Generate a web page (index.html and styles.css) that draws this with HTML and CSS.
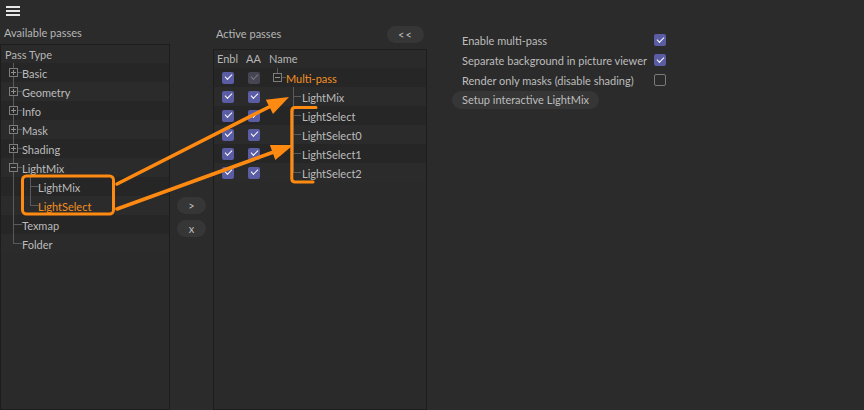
FILE: index.html
```html
<!DOCTYPE html>
<html>
<head>
<meta charset="utf-8">
<link rel="stylesheet" href="styles.css">
</head>
<body>
<div class="app">
  <header class="topbar">
    <span class="burger"><i></i><i></i><i></i></span>
  </header>
  <main class="main">
    <section class="col-avail">
      <div class="sec-label">Available passes</div>
      <div class="panel">
        <div class="panel-head low">Pass Type</div>
        <div class="rows tree">
          <div class="node"><span class="exp plus"></span>Basic</div>
          <div class="node"><span class="exp plus"></span>Geometry</div>
          <div class="node"><span class="exp plus"></span>Info</div>
          <div class="node"><span class="exp plus"></span>Mask</div>
          <div class="node"><span class="exp plus"></span>Shading</div>
          <div class="node"><span class="exp minus"></span>LightMix</div>
          <div class="node child"><span class="sub"></span>LightMix</div>
          <div class="node child sub-last"><span class="sub"></span><span class="hl">LightSelect</span></div>
          <div class="node leaf">Texmap</div>
          <div class="node leaf last">Folder</div>
        </div>
      </div>
    </section>

    <section class="col-move">
      <button class="pill small">&gt;</button>
      <button class="pill small">x</button>
    </section>

    <section class="col-active">
      <div class="sec-label row-label">
        <span>Active passes</span>
        <button class="pill back">&lt;&lt;</button>
      </div>
      <div class="panel">
        <div class="panel-head cols">
          <span class="h-enbl">Enbl</span><span class="h-aa">AA</span><span>Name</span>
        </div>
        <div class="rows">
          <div class="arow">
            <span class="cb on"></span><span class="cb dis"></span>
            <span class="name root"><span class="exp minus"></span><span class="hl">Multi-pass</span></span>
          </div>
          <div class="arow">
            <span class="cb on"></span><span class="cb on"></span>
            <span class="name kid">LightMix</span>
          </div>
          <div class="arow">
            <span class="cb on"></span><span class="cb on"></span>
            <span class="name kid">LightSelect</span>
          </div>
          <div class="arow">
            <span class="cb on"></span><span class="cb on"></span>
            <span class="name kid">LightSelect0</span>
          </div>
          <div class="arow">
            <span class="cb on"></span><span class="cb on"></span>
            <span class="name kid">LightSelect1</span>
          </div>
          <div class="arow">
            <span class="cb on"></span><span class="cb on"></span>
            <span class="name kid kid-last">LightSelect2</span>
          </div>
        </div>
      </div>
    </section>

    <section class="col-settings">
      <div class="opt"><span class="opt-label">Enable multi-pass</span><span class="cb on"></span></div>
      <div class="opt"><span class="opt-label">Separate background in picture viewer</span><span class="cb on"></span></div>
      <div class="opt"><span class="opt-label">Render only masks (disable shading)</span><span class="cb off"></span></div>
      <button class="pill setup">Setup interactive LightMix</button>
    </section>
  </main>

  <svg class="annot" width="864" height="410" viewBox="0 0 864 410">
    <g fill="none" stroke="#ff8a12" stroke-width="3" stroke-linecap="round" stroke-linejoin="round">
      <rect x="22.5" y="176" width="91" height="38" rx="4"/>
      <path d="M316 107.5 H295 Q291.8 107.5 291.8 111 V178.5 Q291.8 182 295 182 H313"/>
      <line x1="117" y1="184" x2="270" y2="106.5" stroke-width="3.6"/>
      <line x1="117" y1="209" x2="273" y2="152.3" stroke-width="3.6"/>
    </g>
    <g fill="#ff8a12">
      <polygon points="289,97 273,114 265.8,99.8"/>
      <polygon points="293.3,145 275.3,159.9 269.9,144.9"/>
    </g>
  </svg>
</div>
</body>
</html>
```
FILE: styles.css
```css
* { box-sizing: border-box; }

html, body {
  margin: 0;
  padding: 0;
  background: #2b2b2b;
}

body {
  font-family: "Lato", "Liberation Sans", sans-serif;
  font-size: 11px;
  color: #bcbcbc;
}

.app {
  position: relative;
  width: 864px;
  height: 410px;
  overflow: hidden;
}

/* ---------- top bar ---------- */
.topbar {
  height: 22px;
  padding: 6px 0 0 6px;
}
.burger {
  display: flex;
  flex-direction: column;
  gap: 2px;
  width: 14px;
}
.burger i {
  display: block;
  height: 2px;
  background: #e6e6e6;
}

/* ---------- main columns ---------- */
.main {
  display: flex;
  height: 388px;
}

.sec-label {
  height: 22px;
  line-height: 22px;
  padding-left: 4px;
  color: #b6b6b6;
}

.panel {
  flex: 1;
  display: flex;
  flex-direction: column;
  border: 1px solid #1d1d1d;
  background: #2a2a2a;
}

.panel-head {
  height: 18px;
  line-height: 18px;
  padding-left: 4px;
  color: #b6b6b6;
}
.panel-head.low { padding-top: 1px; }

.rows > :nth-child(odd) { background: #262626; }
.rows > :nth-child(even) { background: #2b2b2b; }

/* Available passes */
.col-avail {
  width: 170px;
  display: flex;
  flex-direction: column;
}

.node {
  position: relative;
  height: 19px;
  line-height: 19px;
  padding-top: 1px;
  padding-left: 21px;
  white-space: nowrap;
}
.node::before {
  content: "";
  position: absolute;
  left: 12px;
  top: 0;
  bottom: 0;
  width: 1px;
  background: #5a5a5a;
}
.node::after {
  content: "";
  position: absolute;
  left: 12px;
  top: 9px;
  width: 9px;
  height: 1px;
  background: #5a5a5a;
}
.node.last::before { bottom: 9px; }
.node.child { padding-left: 37px; }
.node.child::after { display: none; }

.sub {
  position: absolute;
  left: 29px;
  top: 0;
  bottom: 0;
  width: 9px;
  border-left: 1px solid #5a5a5a;
}
.sub::after {
  content: "";
  position: absolute;
  left: 0;
  top: 9px;
  width: 8px;
  height: 1px;
  background: #5a5a5a;
}
.sub-last .sub { bottom: 9px; }

.exp {
  position: absolute;
  width: 9px;
  height: 9px;
  border: 1px solid #7c7c7c;
  background: #2a2a2a;
  z-index: 1;
}
.tree .exp { left: 8px; top: 5px; }
.exp::before {
  content: "";
  position: absolute;
  left: 1px;
  right: 1px;
  top: 3px;
  height: 1px;
  background: #8e8e8e;
}
.exp.plus::after {
  content: "";
  position: absolute;
  top: 1px;
  bottom: 1px;
  left: 3px;
  width: 1px;
  background: #8e8e8e;
}
.rows > :nth-child(odd) .exp { background: #262626; }

.hl { color: #f39021; }

/* middle move buttons */
.col-move {
  width: 43px;
  display: flex;
  flex-direction: column;
  gap: 6px;
  padding: 175px 0 0 7px;
}

.pill {
  font: inherit;
  color: #bdbdbd;
  background: #363636;
  border: none;
  border-radius: 9px;
  height: 17px;
  padding: 0;
  line-height: 17px;
  cursor: pointer;
}
.pill.small { width: 29px; }

/* Active passes */
.col-active {
  width: 214px;
  display: flex;
  flex-direction: column;
}
.row-label {
  height: 27px;
  display: flex;
  align-items: flex-start;
  justify-content: space-between;
  padding: 0 3px 0 3px;
  line-height: 24px;
}
.pill.back {
  width: 37px;
  margin-top: 4px;
  letter-spacing: 1px;
}

.cols {
  display: flex;
  padding-left: 3px;
}
.h-enbl { width: 29px; }
.h-aa { width: 23px; }

.arow {
  display: flex;
  align-items: center;
  height: 19px;
  padding-left: 8px;
  gap: 14px;
}

.cb {
  flex: none;
  position: relative;
  width: 12px;
  height: 12px;
  border-radius: 2px;
}
.cb.on { background: #5b5da4; }
.cb.dis { background: #464652; }
.cb.off { border: 1px solid #7a7a7a; }
.cb.on::after,
.cb.dis::after {
  content: "";
  position: absolute;
  left: 3px;
  top: 2.5px;
  width: 6px;
  height: 3px;
  border-left: 1.6px solid #ffffff;
  border-bottom: 1.6px solid #ffffff;
  transform: rotate(-45deg);
}
.cb.dis::after { border-color: #7a7a88; }

.name {
  position: relative;
  align-self: stretch;
  flex: 1;
  margin-left: -14px;
  line-height: 19px;
  padding-top: 1px;
  white-space: nowrap;
}
.name.root { padding-left: 26px; }
.name.root .exp { left: 13px; top: 5px; }
.name.root::before {
  content: "";
  position: absolute;
  left: 17px;
  top: 0;
  height: 5px;
  width: 1px;
  background: #5a5a5a;
}
.name.root::after {
  content: "";
  position: absolute;
  left: 22px;
  top: 9px;
  width: 4px;
  height: 1px;
  background: #5a5a5a;
}
.name.kid { padding-left: 42px; }
.name.kid::before {
  content: "";
  position: absolute;
  left: 33px;
  top: 0;
  bottom: 0;
  width: 1px;
  background: #5a5a5a;
}
.name.kid-last::before { bottom: 9px; }
.name.kid::after {
  content: "";
  position: absolute;
  left: 33px;
  top: 9px;
  width: 8px;
  height: 1px;
  background: #5a5a5a;
}

/* settings */
.col-settings {
  display: flex;
  flex-direction: column;
  align-items: flex-start;
  padding: 8px 0 0 25px;
}
.opt {
  display: flex;
  align-items: center;
  height: 20px;
  padding-left: 10px;
}
.opt-label { width: 192px; color: #bdbdbd; }
.pill.setup {
  margin-top: 1px;
  height: 18px;
  line-height: 18px;
  padding: 0 10px;
}

/* annotation overlay */
.annot {
  position: absolute;
  left: 0;
  top: 0;
  pointer-events: none;
}
```
